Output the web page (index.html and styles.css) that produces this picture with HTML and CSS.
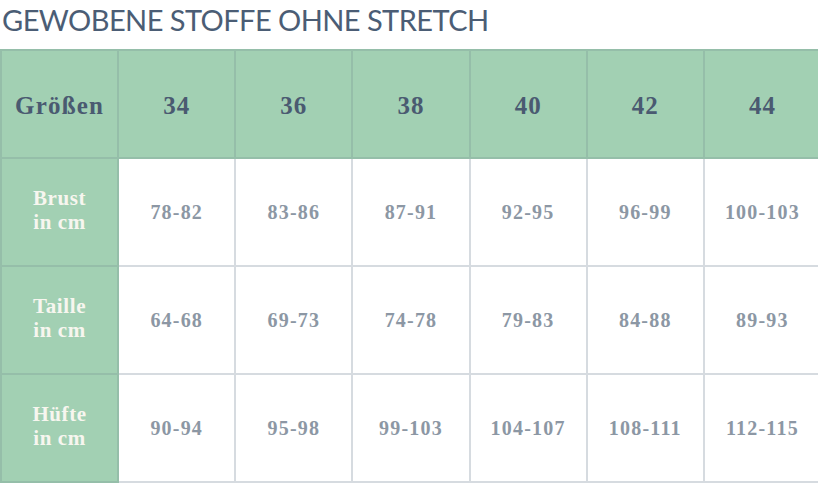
FILE: index.html
```html
<!DOCTYPE html>
<html lang="de">
<head>
<meta charset="utf-8">
<link rel="stylesheet" href="styles.css">
</head>
<body>
<h1 class="title">GEWOBENE STOFFE OHNE STRETCH</h1>
<table class="sizes">
  <thead>
    <tr>
      <th class="corner">Größen</th>
      <th>34</th><th>36</th><th>38</th><th>40</th><th>42</th><th>44</th>
    </tr>
  </thead>
  <tbody>
    <tr>
      <th class="label">Brust<br>in cm</th>
      <td>78-82</td><td>83-86</td><td>87-91</td><td>92-95</td><td>96-99</td><td>100-103</td>
    </tr>
    <tr>
      <th class="label">Taille<br>in cm</th>
      <td>64-68</td><td>69-73</td><td>74-78</td><td>79-83</td><td>84-88</td><td>89-93</td>
    </tr>
    <tr>
      <th class="label">Hüfte<br>in cm</th>
      <td>90-94</td><td>95-98</td><td>99-103</td><td>104-107</td><td>108-111</td><td>112-115</td>
    </tr>
  </tbody>
</table>
</body>
</html>
```

FILE: styles.css
```css
html, body {
  margin: 0;
  padding: 0;
  overflow: hidden;
  background: #ffffff;
}

.title {
  margin: 0;
  padding: 3px 0 0 2px;
  height: 46px;
  box-sizing: border-box;
  font-family: "Lato", "DejaVu Sans", sans-serif;
  font-weight: 400;
  font-size: 29px;
  line-height: 34px;
  color: #4b5d75;
  letter-spacing: -0.55px;
  white-space: nowrap;
}

.sizes {
  border-collapse: collapse;
  table-layout: fixed;
  width: 822px;
  margin-top: 3px;
  font-family: "Liberation Serif", "DejaVu Serif", serif;
  font-weight: 700;
}

.sizes tr {
  height: 108px;
}

.sizes th,
.sizes td {
  width: 117px;
  height: 108px;
  padding: 0;
  text-align: center;
  vertical-align: middle;
  box-sizing: border-box;
}

.sizes thead th {
  background: #a2d0b3;
  border: 2px solid #95bea9;
  color: #4a5a71;
  font-size: 25px;
  letter-spacing: 1px;
  padding-top: 3px;
}

.sizes .corner {
  font-size: 25px;
  letter-spacing: 1.2px;
}

.sizes .label {
  background: #a2d0b3;
  border: 2px solid #95bea9;
  color: #f7f6ef;
  font-size: 21px;
  line-height: 24px;
  letter-spacing: 0.6px;
  padding-bottom: 5px;
}

.sizes td {
  background: #ffffff;
  border: 2px solid #d6dbe0;
  color: #8c97a4;
  font-size: 20px;
  letter-spacing: 1.2px;
  padding-bottom: 0;
}
```
